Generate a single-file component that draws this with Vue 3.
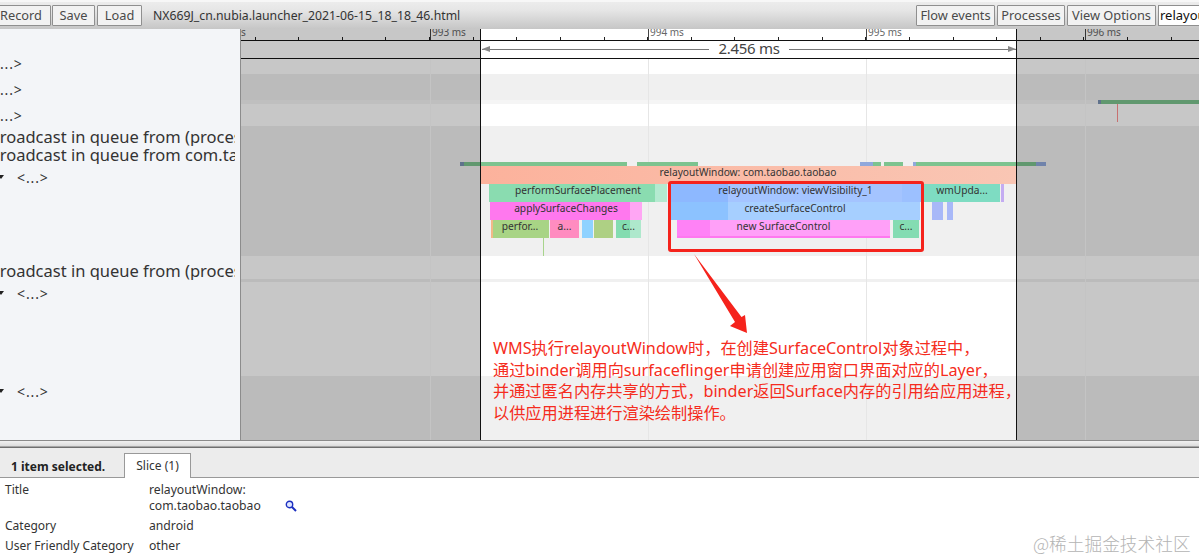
<script setup>
const X0 = 241
const Y0 = 29
const labelRows = [
  { h: 22 },
  { h: 26, text: '<...>', cls: 'tiny cut' },
  { h: 26, text: '<...>', cls: 'tiny cut' },
  { h: 25, text: '<...>', cls: 'tiny cut' },
  { h: 18, text: 'Broadcast in queue from (process', cls: 'big' },
  { h: 18, text: 'Broadcast in queue from com.taobao', cls: 'big' },
  { h: 26, text: '<...>', cls: 'tiny open' },
  { h: 72 },
  { h: 18, text: 'Broadcast in queue from (process', cls: 'big' },
  { h: 28, text: '<...>', cls: 'tiny open' },
  { h: 70 },
  { h: 28, text: '<...>', cls: 'tiny open' },
]
const bands = [
  { h: 15, c: '#ffffff' }, { h: 26, c: '#f0f0f0' }, { h: 4, c: '#f5f5f5' }, { h: 22, c: '#ffffff' },
  { h: 130, c: '#f0f0f0' }, { h: 23, c: '#ffffff' }, { h: 3, c: '#f0f0f0' }, { h: 94, c: '#ffffff' }, { h: 64, c: '#f0f0f0' },
]
const majors = [
  { x: 430, t: '993 ms' }, { x: 648, t: '994 ms' }, { x: 866, t: '995 ms' }, { x: 1085, t: '996 ms' },
]
const minors = []
for (let i = 0; i < 23; i++) {
  const x = Math.round(254.6 + i * 43.62)
  if (x < 1199) minors.push(x)
}
const grid = [
  { x: 430, out: true }, { x: 648 }, { x: 866 }, { x: 1085, out: true },
]
const seg = (a, b, c, d) => `linear-gradient(90deg, ${a} ${b}px, ${c} ${b}px, ${d || c})`
const slices = [
  { x: 460, w: 4, y: 162, h: 4, bg: '#7b93b4' },
  { x: 464, w: 163, y: 162, h: 4, bg: '#7dc38f' },
  { x: 637, w: 61, y: 162, h: 4, bg: '#7dc38f' },
  { x: 860, w: 13, y: 162, h: 4, bg: '#90a8dc' },
  { x: 873, w: 8, y: 162, h: 4, bg: '#7dc38f' },
  { x: 884, w: 19, y: 162, h: 4, bg: '#7dc38f' },
  { x: 913, w: 3, y: 162, h: 4, bg: '#90a8dc' },
  { x: 916, w: 120, y: 162, h: 4, bg: '#7dc38f' },
  { x: 1036, w: 10, y: 162, h: 4, bg: '#90a8dc' },
  { x: 1098, w: 3, y: 100, h: 4, bg: '#7b93b4' },
  { x: 1101, w: 98, y: 100, h: 4, bg: '#7dc38f' },
  { x: 1117, w: 1, y: 104, h: 18, bg: '#ff9090' },
  { x: 543, w: 1, y: 238, h: 18, bg: '#a8d48c' },
  { x: 480, w: 536, y: 166, h: 18, bg: 'linear-gradient(90deg,#fcb29c,#f9c6b4)', t: 'relayoutWindow: com.taobao.taobao' },
  { x: 489, w: 178, y: 184, h: 18, bg: seg('#8adcb0', 166, '#b4ead0'), t: 'performSurfacePlacement' },
  { x: 490, w: 152, y: 202, h: 18, bg: seg('#ff78ee', 140, '#ffa6f4'), t: 'applySurfaceChanges' },
  { x: 491, w: 58, y: 220, h: 18, bg: seg('#f2b888', 2, '#a8d485'), t: 'perfor...' },
  { x: 550, w: 29, y: 220, h: 18, bg: '#ff8cc0', t: 'a...' },
  { x: 582, w: 11, y: 220, h: 18, bg: '#8fd2ff' },
  { x: 594, w: 19, y: 220, h: 18, bg: '#aed084' },
  { x: 616, w: 25, y: 220, h: 18, bg: seg('#84dcb0', 14, '#aee8cc'), t: 'c...' },
  { x: 670, w: 251, y: 184, h: 18, bg: 'linear-gradient(90deg,#8db8ff 0,#8db8ff 58px,#a4c4ff 58px,#a4c4ff 232px,#9cc0ff 232px)', t: 'relayoutWindow: viewVisibility_1' },
  { x: 670, w: 250, y: 202, h: 18, bg: seg('#8cc2ff', 58, '#a6cfff'), t: 'createSurfaceControl' },
  { x: 677, w: 213, y: 220, h: 16, bg: seg('#ff82f6', 33, '#ffa0f8'), t: 'new SurfaceControl' },
  { x: 677, w: 213, y: 236, h: 2, bg: '#ff78f0' },
  { x: 893, w: 26, y: 220, h: 18, bg: '#84dcb2', t: 'c...' },
  { x: 924, w: 76, y: 184, h: 18, bg: '#7edcc2', t: 'wmUpda...' },
  { x: 1001, w: 3, y: 184, h: 18, bg: '#c4acf2' },
  { x: 932, w: 11, y: 202, h: 18, bg: '#a8b8f8' },
  { x: 947, w: 6, y: 202, h: 18, bg: '#a8b8f8' },
]
const px = (v) => v + 'px'
const sliceStyle = (s) => ({
  left: px(s.x - X0), top: px(s.y - Y0), width: px(s.w), height: px(s.h), background: s.bg,
})
const details = [
  { k: 'Title', v: ['relayoutWindow:', 'com.taobao.taobao'], icon: true },
  { k: 'Category', v: ['android'] },
  { k: 'User Friendly Category', v: ['other'] },
]
</script>

<template>
  <div class="app">
    <header class="toolbar">
      <div class="btns">
        <button class="btn rec">Record</button>
        <button class="btn save">Save</button>
        <button class="btn load">Load</button>
        <span class="title">NX669J_cn.nubia.launcher_2021-06-15_18_18_46.html</span>
      </div>
      <div class="btns right">
        <button class="btn flow">Flow events</button>
        <button class="btn proc">Processes</button>
        <button class="btn view">View Options</button>
        <div class="search">relayoutWindow</div>
      </div>
    </header>

    <main class="main">
      <aside class="labels">
        <div v-for="(r, i) in labelRows" :key="i" class="lrow" :class="r.cls" :style="{ height: r.h + 'px' }">
          <span v-if="r.text" class="ltext">{{ r.text }}</span>
        </div>
      </aside>

      <section class="canvas">
        <div class="ruler"></div>
        <div class="range"></div>
        <div class="bands">
          <div v-for="(b, i) in bands" :key="i" :style="{ height: b.h + 'px', background: b.c }"></div>
        </div>

        <i v-for="g in grid" :key="g.x" class="gridline" :class="{ out: g.out }" :style="{ left: (g.x - X0) + 'px' }"></i>
        <i v-for="m in minors" :key="m" class="minor" :style="{ left: (m - X0) + 'px' }"></i>
        <template v-for="m in majors" :key="m.x">
          <i class="major" :style="{ left: (m.x - X0) + 'px' }"></i>
          <span class="mlabel" :style="{ left: (m.x - X0 + 2) + 'px' }">{{ m.t }}</span>
        </template>
        <span class="mlabel first">s</span>

        <div class="arrowline left"><b class="head hl"></b></div>
        <div class="arrowline right"><b class="head hr"></b></div>
        <span class="rangetext">2.456 ms</span>

        <div v-for="(s, i) in slices" :key="i" class="slice" :style="sliceStyle(s)">{{ s.t }}</div>

        <div class="shade sl"></div>
        <div class="shade sr"></div>
        <i class="sel a"></i>
        <i class="sel b"></i>

        <div class="redbox"></div>
        <svg class="redarrow" width="60" height="84" viewBox="0 0 60 84">
          <polygon points="0,0 47.5,63 51,61 53,79 36,72 41,68" fill="#f5231c" />
        </svg>
        <div class="note">
          <p>WMS执行relayoutWindow时，在创建SurfaceControl对象过程中，</p>
          <p>通过binder调用向surfaceflinger申请创建应用窗口界面对应的Layer，</p>
          <p>并通过匿名内存共享的方式，binder返回Surface内存的引用给应用进程，</p>
          <p>以供应用进程进行渲染绘制操作。</p>
        </div>
      </section>
    </main>

    <footer class="panel">
      <div class="grip"></div>
      <div class="tabs">
        <strong class="count">1 item selected.</strong>
        <span class="tab">Slice (1)</span>
      </div>
      <div class="table">
        <div v-for="d in details" :key="d.k" class="drow">
          <span class="dk">{{ d.k }}</span>
          <span class="dv">
            <span v-for="l in d.v" :key="l" class="dl">{{ l }}</span>
          </span>
          <svg v-if="d.icon" class="mag" width="12" height="12" viewBox="0 0 12 12">
            <circle cx="4.5" cy="4.5" r="3.2" fill="#dfe6ff" stroke="#1c2fc0" stroke-width="1.4" />
            <line x1="7" y1="7" x2="11" y2="11" stroke="#1c2fc0" stroke-width="2" />
          </svg>
        </div>
      </div>
      <span class="mark">@稀土掘金技术社区</span>
    </footer>
  </div>
</template>

<style>
html, body { margin: 0; overflow: hidden; background: #fff; }
</style>

<style scoped>
.app {
  width: 1199px; height: 560px; overflow: hidden; display: flex; flex-direction: column;
  font-family: "Noto Sans", "Noto Sans CJK SC", sans-serif; color: #333; position: relative;
}
.toolbar {
  height: 29px; flex: none; box-sizing: border-box; display: flex; justify-content: space-between;
  align-items: flex-start; background: linear-gradient(#ececec 0, #e6e6e6 8px, #c6c6c6 100%); border-top: 2px solid #f7f7f7;
  padding-top: 3px;
}
.btns { display: flex; align-items: center; height: 21px; }
.btn {
  box-sizing: border-box; height: 21px; padding: 0; border: 1px solid #8f8f8f; border-radius: 1px; background: #f2f2f2;
  font: 12.8px/19px "Noto Sans", sans-serif; color: #4a4a4a; text-align: center;
}
.rec { width: 60px; margin-left: -9px; }
.save { width: 43px; margin-left: 1px; }
.load { width: 45px; margin-left: 2px; }
.title { margin-left: 11px; font-size: 12.25px; color: #333; white-space: nowrap; }
.flow { width: 79px; }
.proc { width: 68px; margin-left: 2px; }
.view { width: 89px; margin-left: 2px; }
.search {
  box-sizing: border-box; width: 41px; height: 21px; margin-left: 2px; border: 1px solid #8f8f8f; border-right: 0; background: #fff;
  font-size: 13px; line-height: 19px; color: #111; overflow: hidden; white-space: nowrap; padding-left: 1px;
}
.main { flex: none; height: 411px; display: flex; }
.labels {
  width: 241px; flex: none; box-sizing: border-box; border-right: 1px solid #8c8c8c; background: #f3f5f8; overflow: hidden;
}
.lrow { overflow: hidden; white-space: nowrap; position: relative; margin-right: 5px; }
.ltext { display: block; }
.tiny { font-size: 14px; letter-spacing: 0.9px; line-height: 26px; color: #333; }
.cut .ltext { margin-left: -9px; }
.open { line-height: 28px; }
.open .ltext { margin-left: 17px; }
.open::before {
  content: ""; position: absolute; left: -2px; top: 11px; border: 3px solid transparent; border-top: 4px solid #222; border-bottom: 0;
}
.big { font-size: 16.5px; line-height: 18px; color: #333; }
.big .ltext { margin-left: -11px; }

.canvas { position: relative; flex: none; width: 958px; height: 411px; overflow: hidden; background: #fff; }
.ruler { height: 11px; }
.range { box-sizing: border-box; border-top: 1px solid #111; border-bottom: 1px solid #111; height: 19px; }
.bands { display: flex; flex-direction: column; }
.gridline { position: absolute; top: 30px; bottom: 0; width: 1px; background: #e6e6e6; }
.gridline.out { z-index: 1; background: #c4c4c4; }
.minor { position: absolute; top: 8px; width: 1px; height: 3px; background: #222; }
.major { position: absolute; top: 0; width: 1px; height: 11px; background: #444; }
.mlabel { position: absolute; top: -3px; font-size: 10px; line-height: 12px; color: #666; white-space: nowrap; }
.mlabel.first { left: 0; }
.arrowline { position: absolute; top: 20px; height: 1px; background: #777; }
.arrowline.left { left: 241px; width: 227px; }
.arrowline.right { left: 548px; width: 227px; }
.head { position: absolute; top: -3px; width: 0; height: 0; border: 3.5px solid transparent; }
.hl { left: 0; border-left: 0; border-right: 8px solid #888; }
.hr { right: 0; border-right: 0; border-left: 8px solid #888; }
.rangetext { position: absolute; left: 468px; top: 9px; width: 80px; text-align: center; font-size: 15px; letter-spacing: -0.3px; line-height: 20px; color: #444; white-space: nowrap; }
.slice {
  position: absolute; box-sizing: border-box; overflow: hidden; white-space: nowrap; text-align: center;
  font-size: 10.2px; line-height: 13px; color: #333;
}
.shade { position: absolute; top: 0; bottom: 0; background: rgba(0, 0, 0, 0.22); }
.sl { left: 0; width: 239px; }
.sr { left: 775px; right: 0; }
.sel { position: absolute; top: 0; bottom: 0; width: 1px; background: #111; }
.sel.a { left: 239px; }
.sel.b { left: 775px; }
.redbox {
  position: absolute; left: 427px; top: 152px; width: 256px; height: 71px; box-sizing: border-box;
  border: 3px solid #f5231c; border-radius: 3px;
}
.redarrow { position: absolute; left: 453px; top: 225px; }
.note {
  position: absolute; left: 252px; top: 309px; width: 540px; color: #f52c20; font-size: 16.2px; line-height: 21.7px;
  font-family: "Noto Sans", "Noto Sans CJK SC", sans-serif; white-space: nowrap;
}
.note p { margin: 0; }

.panel { flex: 1; position: relative; display: flex; flex-direction: column; background: #fff; }
.grip { height: 8px; flex: none; box-sizing: border-box; background: linear-gradient(#8a8a8a 0, #8a8a8a 1px, #f0f0f0 1px, #dcdcdc 6px, #6f6f6f 7px); }
.tabs {
  height: 30px; flex: none; box-sizing: border-box; background: #ececec; border-bottom: 1px solid #999; display: flex; align-items: flex-end;
}
.count { margin-left: 11px; width: 113px; align-self: center; font-size: 12px; color: #222; margin-top: 7px; white-space: nowrap; }
.tab {
  box-sizing: border-box; width: 67px; height: 25px; margin-bottom: -1px; border: 1px solid #999; border-bottom: 0; background: #fff;
  font-size: 12px; line-height: 24px; text-align: center; color: #333;
}
.table { padding: 4px 0 0 5px; display: flex; flex-direction: column; }
.drow { display: flex; align-items: flex-start; position: relative; margin-bottom: 4px; }
.dk { width: 144px; flex: none; font-size: 12px; line-height: 16px; color: #333; white-space: nowrap; }
.dv { display: flex; flex-direction: column; width: 130px; font-size: 12.2px; line-height: 16px; color: #333; }
.dl { display: block; white-space: nowrap; }
.mag { margin-top: 18px; margin-left: 6px; }
.mark { position: absolute; left: 1033px; top: 91px; font-size: 17.7px; line-height: 24px; color: #b4b4b4; white-space: nowrap; font-family: "Noto Sans CJK SC", sans-serif; font-weight: 300; }
</style>
